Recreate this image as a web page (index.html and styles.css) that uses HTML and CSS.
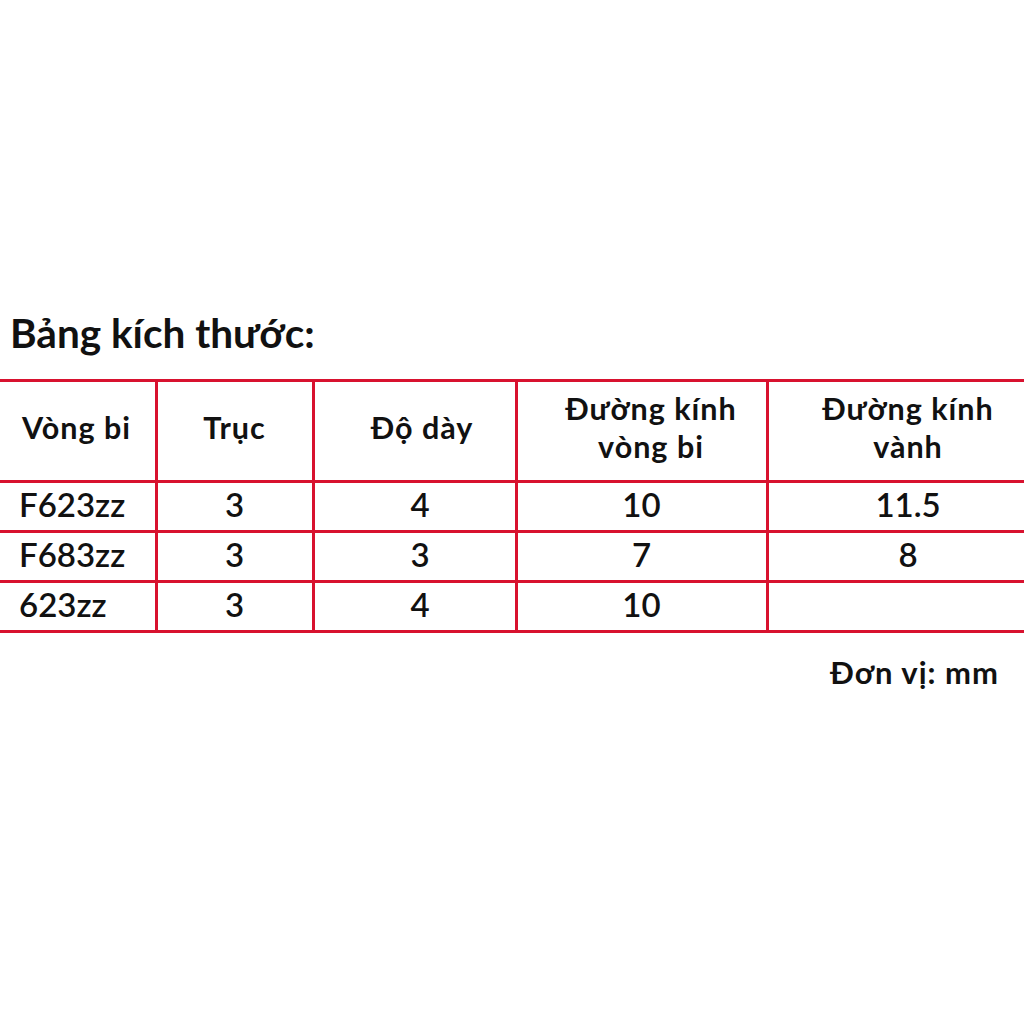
FILE: index.html
```html
<!DOCTYPE html>
<html lang="vi">
<head>
<meta charset="utf-8">
<link rel="stylesheet" href="styles.css">
</head>
<body>
<div class="page">
  <h1 class="title">Bảng kích thước:</h1>
  <table class="sizes">
    <colgroup>
      <col class="c1"><col class="c2"><col class="c3"><col class="c4"><col class="c5">
    </colgroup>
    <tr class="head">
      <th class="first">Vòng bi</th>
      <th>Trục</th>
      <th class="thick">Độ dày</th>
      <th class="dia">Đường kính<br>vòng bi</th>
      <th>Đường kính<br>vành</th>
    </tr>
    <tr>
      <td class="first">F623zz</td><td>3</td><td class="thick">4</td><td>10</td><td>11.5</td>
    </tr>
    <tr>
      <td class="first">F683zz</td><td>3</td><td class="thick">3</td><td>7</td><td>8</td>
    </tr>
    <tr>
      <td class="first">623zz</td><td>3</td><td class="thick">4</td><td>10</td><td></td>
    </tr>
  </table>
  <p class="unit">Đơn vị: mm</p>
</div>
</body>
</html>
```
FILE: styles.css
```css
html, body {
  margin: 0;
  padding: 0;
  background: #ffffff;
}
.page {
  width: 1024px;
  height: 1024px;
  overflow: hidden;
  font-family: Lato, "Open Sans", sans-serif;
  color: #111111;
  padding-top: 309px;
  box-sizing: border-box;
}
.title {
  margin: 0 0 0 10px;
  font-size: 40.5px;
  font-weight: 700;
  line-height: 48px;
  height: 70px;
}
.sizes {
  border-collapse: collapse;
  table-layout: fixed;
  width: 1051px;
  margin-left: -2px;
}
.c1 { width: 158px; }
.c2 { width: 157px; }
.c3 { width: 203px; }
.c4 { width: 251px; }
.c5 { width: 282px; }
.sizes th, .sizes td {
  border: 3px solid #d8122f;
  padding: 0;
  text-align: center;
  vertical-align: middle;
}
.sizes th {
  height: 90px;
  padding-bottom: 8px;
  font-size: 30.5px;
  font-weight: 700;
  letter-spacing: 1px;
  line-height: 38px;
}
.sizes td {
  height: 42px;
  padding-bottom: 5px;
  font-size: 33px;
  font-weight: 600;
  line-height: 30px;
}
.sizes .first {
  text-align: left;
  padding-left: 24px;
  border-left: none;
}
.sizes td.first {
  padding-left: 21px;
}
.sizes td.thick {
  padding-left: 11px;
}
.sizes th.thick {
  padding-left: 15px;
}
.sizes th.dia {
  padding-left: 19px;
}
.unit {
  margin: 21px 25px 0 0;
  text-align: right;
  font-size: 31px;
  font-weight: 700;
  letter-spacing: 1px;
  line-height: 36px;
}
```
